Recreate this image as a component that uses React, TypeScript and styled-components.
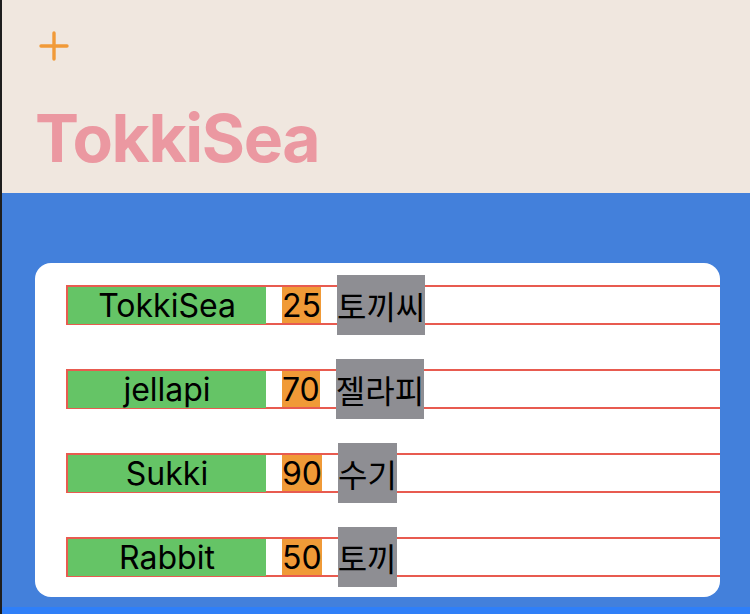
import styled, { createGlobalStyle } from 'styled-components';

const GlobalStyle = createGlobalStyle`
  html, body {
    margin: 0;
    padding: 0;
    background: #1e1e1e;
  }
  body {
    font-family: Inter, "Noto Sans CJK KR", sans-serif;
  }
`;

const rabbits = [
  { name: 'TokkiSea', age: 25, nick: '토끼씨' },
  { name: 'jellapi', age: 70, nick: '젤라피' },
  { name: 'Sukki', age: 90, nick: '수기' },
  { name: 'Rabbit', age: 50, nick: '토끼' },
];

const Screen = styled.div`
  margin-left: 2px;
  width: 748px;
  height: 614px;
  display: flex;
  flex-direction: column;
  overflow: hidden;
`;

const Header = styled.header`
  height: 193px;
  flex-shrink: 0;
  background: #f0e7df;
  padding: 31px 0 0 35px;
  box-sizing: border-box;
  display: flex;
  flex-direction: column;
`;

const AddButton = styled.button`
  width: 30px;
  height: 30px;
  margin-left: 2px;
  padding: 0;
  border: none;
  background: none;
  display: flex;
`;

const Title = styled.h1`
  margin: 44px 0 0 -2px;
  font-family: Inter, sans-serif;
  font-size: 66px;
  font-weight: 700;
  letter-spacing: -1.4px;
  line-height: 1;
  color: #eb98a1;
`;

const Body = styled.main`
  flex: 1;
  display: flex;
  flex-direction: column;
  background: #4380db;
`;

const Content = styled.div`
  flex: 1;
  padding: 70px 30px 0 33px;
`;

const HomeBar = styled.div`
  height: 7px;
  background: #2f7ff8;
`;

const Card = styled.section`
  height: 334px;
  background: #ffffff;
  border-radius: 16px;
  padding: 22px 0 0 31px;
  box-sizing: border-box;
  overflow: hidden;
  display: flex;
  flex-direction: column;
  gap: 44px;
`;

const Row = styled.div`
  width: 700px;
  height: 40px;
  box-sizing: border-box;
  border: 2px solid #e85b50;
  border-right: none;
  display: flex;
  align-items: center;
  gap: 16px;
  font-size: 32px;
  color: #000;
`;

const Name = styled.span`
  align-self: stretch;
  width: 198px;
  margin-bottom: -1px;
  background: #65c466;
  display: flex;
  align-items: center;
  justify-content: center;
  font-family: Inter, sans-serif;
`;

const Age = styled.span`
  align-self: stretch;
  background: #f09a37;
  display: flex;
  align-items: center;
  font-family: Inter, sans-serif;
`;

const Nick = styled.span`
  height: 60px;
  background: #8e8e93;
  display: flex;
  align-items: center;
  font-family: "Noto Sans CJK KR", sans-serif;
  font-size: 32px;
`;

export default function App() {
  return (
    <>
      <GlobalStyle />
      <Screen>
        <Header>
          <AddButton aria-label="add">
            <svg width="30" height="30" viewBox="0 0 30 30">
              <path
                d="M15 2v26M2 15h26"
                stroke="#f19a38"
                strokeWidth="3.4"
                strokeLinecap="round"
              />
            </svg>
          </AddButton>
          <Title>TokkiSea</Title>
        </Header>
        <Body>
          <Content>
            <Card>
              {rabbits.map((r) => (
                <Row key={r.name}>
                  <Name>{r.name}</Name>
                  <Age>{r.age}</Age>
                  <Nick>{r.nick}</Nick>
                </Row>
              ))}
            </Card>
          </Content>
          <HomeBar />
        </Body>
      </Screen>
    </>
  );
}
